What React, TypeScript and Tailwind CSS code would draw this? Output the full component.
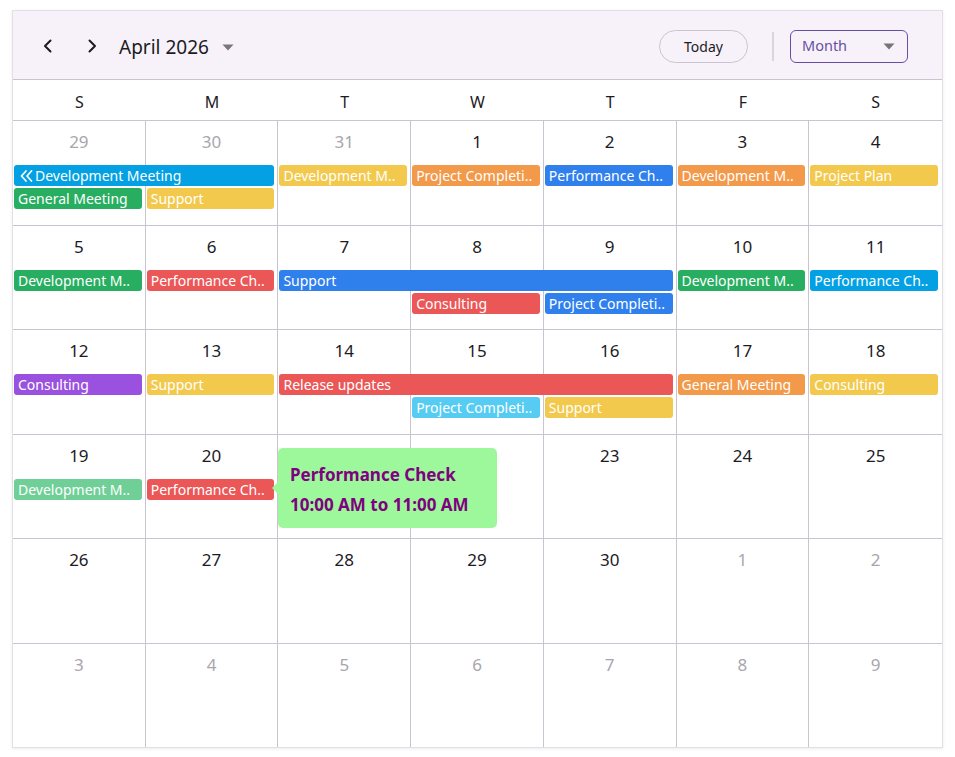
import React from "react";

type Ev = { col: number; span?: number; lane: number; title: string; color: string; cont?: boolean };

type Week = { days: { n: number; other?: boolean }[]; events: Ev[] };

const colStart = ["col-start-1", "col-start-2", "col-start-3", "col-start-4", "col-start-5", "col-start-6", "col-start-7"];
const colSpan: Record<number, string> = { 1: "col-span-1", 2: "col-span-2", 3: "col-span-3" };
const laneRow = ["row-start-2", "row-start-3"];

const CYAN = "bg-[#03a1e4]";
const GREEN = "bg-[#27ae60]";
const YELLOW = "bg-[#f2c94c]";
const ORANGE = "bg-[#f2994a]";
const BLUE = "bg-[#2f80ed]";
const RED = "bg-[#eb5757]";
const PURPLE = "bg-[#9b51e0]";
const LCYAN = "bg-[#56ccf2]";
const LGREEN = "bg-[#6fcf97]";

const range = (a: number, b: number, other = false) =>
    Array.from({ length: b - a + 1 }, (_, i) => ({ n: a + i, other }));

const weeks: Week[] = [
    {
        days: [...range(29, 31, true), ...range(1, 4)],
        events: [
            { col: 1, span: 2, lane: 0, title: "Development Meeting", color: CYAN, cont: true },
            { col: 1, lane: 1, title: "General Meeting", color: GREEN },
            { col: 2, lane: 1, title: "Support", color: YELLOW },
            { col: 3, lane: 0, title: "Development M..", color: YELLOW },
            { col: 4, lane: 0, title: "Project Completi..", color: ORANGE },
            { col: 5, lane: 0, title: "Performance Ch..", color: BLUE },
            { col: 6, lane: 0, title: "Development M..", color: ORANGE },
            { col: 7, lane: 0, title: "Project Plan", color: YELLOW },
        ],
    },
    {
        days: range(5, 11),
        events: [
            { col: 1, lane: 0, title: "Development M..", color: GREEN },
            { col: 2, lane: 0, title: "Performance Ch..", color: RED },
            { col: 3, span: 3, lane: 0, title: "Support", color: BLUE },
            { col: 4, lane: 1, title: "Consulting", color: RED },
            { col: 5, lane: 1, title: "Project Completi..", color: BLUE },
            { col: 6, lane: 0, title: "Development M..", color: GREEN },
            { col: 7, lane: 0, title: "Performance Ch..", color: CYAN },
        ],
    },
    {
        days: range(12, 18),
        events: [
            { col: 1, lane: 0, title: "Consulting", color: PURPLE },
            { col: 2, lane: 0, title: "Support", color: YELLOW },
            { col: 3, span: 3, lane: 0, title: "Release updates", color: RED },
            { col: 4, lane: 1, title: "Project Completi..", color: LCYAN },
            { col: 5, lane: 1, title: "Support", color: YELLOW },
            { col: 6, lane: 0, title: "General Meeting", color: ORANGE },
            { col: 7, lane: 0, title: "Consulting", color: YELLOW },
        ],
    },
    {
        days: range(19, 25),
        events: [
            { col: 1, lane: 0, title: "Development M..", color: LGREEN },
            { col: 2, lane: 0, title: "Performance Ch..", color: RED },
        ],
    },
    { days: [...range(26, 30), ...range(1, 2, true)], events: [] },
    { days: range(3, 9, true), events: [] },
];

function Chevron({ dir }: { dir: "left" | "right" }) {
    return (
        <svg width="10" height="14" viewBox="0 0 10 14" fill="none" stroke="#1c1b1f" strokeWidth="2" strokeLinecap="round" strokeLinejoin="round">
            {dir === "left" ? <path d="M7.5 1.5 L2 7 L7.5 12.5" /> : <path d="M2.5 1.5 L8 7 L2.5 12.5" />}
        </svg>
    );
}

function Caret({ color = "#79747e" }: { color?: string }) {
    return (
        <svg width="12" height="7" viewBox="0 0 12 7">
            <path d="M0.5 0.5 L11.5 0.5 L6 6.5 Z" fill={color} />
        </svg>
    );
}

function EventBar({ ev }: { ev: Ev }) {
    return (
        <div
            className={`${colStart[ev.col - 1]} ${colSpan[ev.span ?? 1]} ${laneRow[ev.lane]} ${ev.color} ml-px mr-[4px] h-[21px] rounded-[3px] flex items-center overflow-hidden whitespace-nowrap text-white text-[14px] leading-[21px] ${ev.cont ? "pl-[6px]" : "pl-[4px]"}`}
        >
            {ev.cont && (
                <svg width="13" height="12" viewBox="0 0 13 12" fill="none" stroke="white" strokeWidth="1.7" strokeLinecap="round" strokeLinejoin="round" className="mr-[2px] shrink-0">
                    <path d="M6 1 L1.5 6 L6 11" />
                    <path d="M11.5 1 L7 6 L11.5 11" />
                </svg>
            )}
            <span>{ev.title}</span>
        </div>
    );
}

function WeekRow({ week, children }: { week: Week; children?: React.ReactNode }) {
    return (
        <div className="relative flex-1 grid grid-cols-7 grid-rows-[44px_23px_23px_1fr] border-b border-[#cac4d0] last:border-b-0">
            {week.days.map((d, i) => (
                <div
                    key={i}
                    className={`${colStart[i]} row-start-1 row-span-4 ${i < 6 ? "border-r border-[#cac4d0]" : ""} flex justify-center`}
                >
                    <span className={`pt-[8px] text-[17px] leading-[25px] ${d.other ? "text-[#a8a6ab]" : "text-[#1c1b1f]"}`}>{d.n}</span>
                </div>
            ))}
            {week.events.map((ev, i) => (
                <EventBar key={i} ev={ev} />
            ))}
            {children}
        </div>
    );
}

export default function App() {
    return (
        <div className="w-[955px] h-[757px] bg-white pt-[10px] pl-[12px]" style={{ fontFamily: '"Noto Sans", "Open Sans", sans-serif' }}>
            <div className="w-[931px] h-[738px] flex flex-col border border-[#e2e0e4] shadow-[0_1px_3px_rgba(0,0,0,0.08)]">
                {/* Toolbar */}
                <div className="h-[69px] shrink-0 bg-[#f7f2fa] border-b border-[#cac4d0] flex items-center pl-[19px] pr-[34px] pt-[2px]">
                    <button className="w-[32px] h-[32px] flex items-center justify-center">
                        <Chevron dir="left" />
                    </button>
                    <button className="w-[32px] h-[32px] flex items-center justify-center ml-[12px]">
                        <Chevron dir="right" />
                    </button>
                    <div className="ml-[11px] flex items-center gap-[13px] pt-[2px]">
                        <span className="text-[19px] text-[#1c1b1f] leading-none">April 2026</span>
                        <Caret />
                    </div>
                    <div className="ml-auto flex items-center">
                        <button className="w-[89px] h-[33px] rounded-full border border-[#cac4d0] text-[14px] text-[#1c1b1f]">Today</button>
                        <div className="w-[2px] h-[29px] bg-[#d9d4de] ml-[24px] mr-[16px]" />
                        <div className="w-[118px] h-[33px] rounded-[6px] border border-[#6750a4] flex items-center justify-between pl-[11px] pr-[12px]">
                            <span className="text-[14.5px] text-[#6750a4]">Month</span>
                            <Caret color="#757575" />
                        </div>
                    </div>
                </div>

                {/* Day names */}
                <div className="h-[41px] shrink-0 grid grid-cols-7 border-b border-[#cac4d0]">
                    {["S", "M", "T", "W", "T", "F", "S"].map((d, i) => (
                        <div key={i} className="flex items-center justify-center pt-[3px] text-[16px] text-[#1c1b1f]">{d}</div>
                    ))}
                </div>

                {/* Weeks */}
                <div className="flex-1 flex flex-col">
                    {weeks.map((w, i) => (
                        <WeekRow key={i} week={w}>
                            {i === 3 && (
                                <div className="absolute left-[265px] top-[13px] w-[219px] h-[80px] rounded-[5px] bg-[#9cf89a] pl-[12px] pt-[12px] text-[#800080] font-bold text-[17px] leading-[30px] z-10">
                                    <div className="absolute left-[-6px] top-[34px] w-0 h-0 border-y-[6px] border-y-transparent border-r-[6px] border-r-[#9cf89a]" />
                                    <div>Performance Check</div>
                                    <div>10:00 AM to 11:00 AM</div>
                                </div>
                            )}
                        </WeekRow>
                    ))}
                </div>
            </div>
        </div>
    );
}
